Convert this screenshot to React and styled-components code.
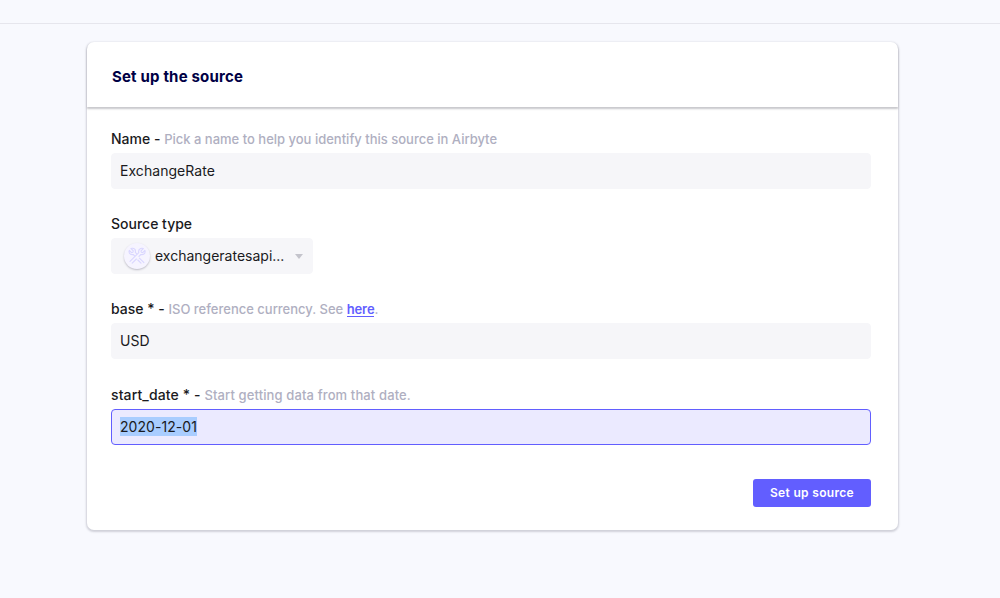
import React from "react";
import styled, { createGlobalStyle } from "styled-components";

const Global = createGlobalStyle`
  * { box-sizing: border-box; }
  body { margin: 0; background: #f8f9fe; font-family: Inter, "Liberation Sans", sans-serif; color: #1a1a21; }
`;
const Page = styled.div`
  height: 598px;
  overflow: hidden;
`;
const TopBar = styled.div`
  height: 24px;
  border-bottom: 1px solid #e6e6ed;
`;
const Card = styled.section`
  width: 811px;
  height: 488px;
  margin: 18px 0 0 87px;
  background: #fff;
  border-radius: 7px;
  box-shadow: 0 1px 2px 1px rgba(26, 25, 50, 0.18);
`;
const Header = styled.h1`
  margin: 0;
  height: 65px;
  padding: 25px 25px 0;
  font-size: 15px;
  line-height: 20px;
  font-weight: 700;
  letter-spacing: 0.18px;
  color: #000045;
  border-radius: 7px 7px 0 0;
  box-shadow: 0 2px 2px rgba(26, 25, 40, 0.24);
`;
const Form = styled.form`
  padding: 22px 27px 0 24px;
`;
const Field = styled.div`
  margin-bottom: ${(p) => p.$gap || 25}px;
`;
const Label = styled.div`
  height: 20px;
  margin-bottom: 4px;
  font-size: 14px;
  line-height: 19px;
  font-weight: 500;
  letter-spacing: ${(p) => p.$spacing || 0}px;
  color: #1a1a21;
  white-space: pre;
`;
const Hint = styled.span`
  font-size: 13px;
  color: #afafc1;
`;
const Link = styled.a`
  display: inline-block;
  line-height: 14px;
  color: #625eff;
  font-weight: 600;
  letter-spacing: -0.1px;
  border-bottom: 1px solid #625eff;
`;
const Box = styled.div`
  display: flex;
  align-items: center;
  width: 100%;
  height: 36px;
  padding: ${(p) => (p.$focus ? "0 8px" : "0 8px 2px")};
  font-size: 14px;
  letter-spacing: 0.05px;
  color: #1a1a21;
  border: 1px solid ${(p) => (p.$focus ? "#625eff" : "#f6f6f9")};
  background: ${(p) => (p.$focus ? "#ebeaff" : "#f6f6f9")};
  border-radius: 4px;
`;
const Select = styled(Box)`
  width: 202px;
  padding: 0 9px 0 12px;
`;
const SelectText = styled.span`
  flex: 1;
  margin: -2px 0 0 5px;
  letter-spacing: 0;
`;
const SourceIcon = styled.span`
  display: grid;
  place-items: center;
  width: 26px;
  height: 26px;
  border-radius: 50%;
  background: #f6f4ff;
  box-shadow: 0 1px 2px rgba(26, 25, 50, 0.26);
`;
const Arrow = styled.span`
  border: 4.5px solid transparent;
  border-top: 5px solid #c4c4cc;
  border-bottom: 0;
`;
const Selected = styled.span`
  line-height: 18px;
  margin-top: -1px;
  padding-top: 1px;
  background: #a9cdff;
`;
const Actions = styled.div`
  display: flex;
  justify-content: flex-end;
`;
const Button = styled.button`
  width: 118px;
  height: 28px;
  border: 0;
  padding: 0 0 1px;
  border-radius: 3px;
  background: #625eff;
  color: #fff;
  font: 600 12px Inter, sans-serif;
  letter-spacing: 0.32px;
`;

const Tools = () => (
  <svg width="18" height="18" viewBox="0 0 18 18" fill="none" stroke="#d9d6ff" strokeWidth="1.1" strokeLinejoin="round" strokeLinecap="round">
    <path d="M3 1.5 5.3 3.8 4.9 5.2 3.5 5.6 1.3 3.3C.7 5.2 1.3 6.6 2.6 7.3c.9.5 1.8.4 2.6.2L6.6 8.9M8.6 6.7 7.3 5.3c.4-1.9-.5-3.6-2.2-4-.7-.2-1.4-.1-2.1.2" />
    <path d="M15.3 1.6 13 3.8l.3 1.4 1.4.4 2.2-2.2c.5 1.7 0 3.1-1.3 3.8-.9.5-1.8.5-2.7.3L11 9.4M15.3 1.6c-.9-.4-1.8-.4-2.6-.1-1.6.7-2.4 2.3-1.9 4.1L2 14.3" />
    <path d="M8.4 12 4.2 16.2M11.4 11.2l4.5 4.5M9.8 13l3.2 3.2" />
  </svg>
);

export default function App() {
  return (
    <Page>
      <Global />
      <TopBar />
      <Card>
        <Header>Set up the source</Header>
        <Form>
          <Field><Label>Name - <Hint>Pick a name to help you identify this source in Airbyte</Hint></Label><Box>ExchangeRate</Box></Field>
          <Field>
            <Label>Source type</Label>
            <Select><SourceIcon><Tools /></SourceIcon><SelectText>exchangeratesapi...</SelectText><Arrow /></Select>
          </Field>
          <Field $gap={26}><Label>base * - <Hint>ISO reference currency. See <Link>here</Link>.</Hint></Label><Box>USD</Box></Field>
          <Field $gap={34}><Label $spacing={0.12}>start_date * - <Hint>Start getting data from that date.</Hint></Label><Box $focus><Selected>2020-12-01</Selected></Box></Field>
          <Actions><Button type="button">Set up source</Button></Actions>
        </Form>
      </Card>
    </Page>
  );
}
